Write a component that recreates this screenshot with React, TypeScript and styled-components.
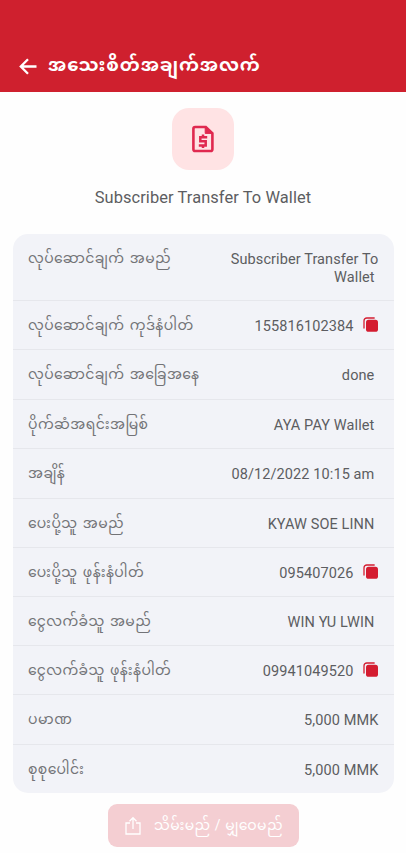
import React from "react";
import styled, { createGlobalStyle } from "styled-components";

const GlobalStyle = createGlobalStyle`
  * { box-sizing: border-box; }
  html, body { margin: 0; background: #fff; overflow: hidden; }
`;

const Screen = styled.main`
  width: 406px;
  height: 853px;
  overflow: hidden;
  display: flex;
  flex-direction: column;
  background: #fefefe;
  color: #5c5d61;
  font-family: Roboto, "Noto Sans Myanmar", "Noto Sans", sans-serif;
`;

const Header = styled.header`
  height: 92px;
  flex: none;
  display: flex;
  align-items: flex-start;
  padding: 52px 0 0 14px;
  background: #cf202e;
  color: #fff;
`;

const BackIcon = styled.svg`
  width: 28px;
  height: 28px;
  flex: none;
`;

const Title = styled.h1`
  margin: 0 0 0 6px;
  font-size: 18px;
  line-height: 26px;
  font-weight: 700;
  letter-spacing: 0.9px;
  white-space: nowrap;
`;

const Summary = styled.section`
  height: 142px;
  flex: none;
  display: flex;
  flex-direction: column;
  align-items: center;
  padding-top: 16px;
`;

const Badge = styled.div`
  width: 62px;
  height: 62px;
  border-radius: 17px;
  display: flex;
  align-items: center;
  justify-content: center;
  background: #ffe3e4;
  color: #e0294f;
`;

const SummaryName = styled.div`
  margin-top: 18px;
  font-size: 16.4px;
  line-height: 20px;
  letter-spacing: 0.1px;
`;

const Card = styled.section`
  margin: 0 12px 0 13px;
  flex: none;
  border-radius: 15px;
  overflow: hidden;
  background: #f2f3f8;
`;

const Row = styled.div<{ $height: number }>`
  height: ${(p) => p.$height}px;
  display: flex;
  justify-content: space-between;
  padding: 15px 15.6px 0 15px;
  border-bottom: 1px solid #e6e7ec;
  &:last-child { border-bottom: 0; }
`;

const Label = styled.div`
  font-size: 14px;
  line-height: 18px;
  color: #727377;
  letter-spacing: 0.43px;
  word-spacing: 1.4px;
  white-space: nowrap;
`;

const Value = styled.div<{ $inset: number }>`
  display: flex;
  align-items: flex-start;
  padding: 2px ${(p) => p.$inset}px 0 0;
  font-size: 14.5px;
  line-height: 17.5px;
  letter-spacing: 0.1px;
  text-align: right;
  white-space: pre;
`;

const CopyIcon = styled.svg`
  width: 16px;
  height: 16px;
  margin: -1px -0.2px 0 9px;
`;

const ShareButton = styled.button`
  width: 191px;
  height: 43px;
  margin: 11px 0 0 108px;
  padding: 0 0 0 15px;
  flex: none;
  display: flex;
  align-items: center;
  border: 0;
  border-radius: 9px;
  background: #f4ced2;
  color: #fff;
  font-family: inherit;
`;

const ShareText = styled.span`
  margin: -2px 0 0 11px;
  font-size: 14px;
  line-height: 20px;
  letter-spacing: 0.35px;
  word-spacing: 0.5px;
  white-space: nowrap;
`;

interface Detail {
  label: string;
  value: string;
  height: number;
  inset: number;
  copy?: boolean;
}

const details: Detail[] = [
  { label: "လုပ်ဆောင်ချက် အမည်", value: "Subscriber Transfer To\nWallet ", height: 67, inset: 0 },
  { label: "လုပ်ဆောင်ချက် ကုဒ်နံပါတ်", value: "155816102384", height: 49, inset: 0, copy: true },
  { label: "လုပ်ဆောင်ချက် အခြေအနေ", value: "done", height: 50, inset: 4 },
  { label: "ပိုက်ဆံအရင်းအမြစ်", value: "AYA PAY Wallet", height: 49, inset: 4 },
  { label: "အချိန်", value: "08/12/2022 10:15 am", height: 50, inset: 4 },
  { label: "ပေးပို့သူ အမည်", value: "KYAW SOE LINN", height: 49, inset: 4 },
  { label: "ပေးပို့သူ ဖုန်းနံပါတ်", value: "095407026", height: 49, inset: 0, copy: true },
  { label: "ငွေလက်ခံသူ အမည်", value: "WIN YU LWIN", height: 49, inset: 4 },
  { label: "ငွေလက်ခံသူ ဖုန်းနံပါတ်", value: "09941049520", height: 49, inset: 0, copy: true },
  { label: "ပမာဏ", value: "5,000 MMK", height: 50, inset: 0 },
  { label: "စုစုပေါင်း", value: "5,000 MMK", height: 48, inset: 0 },
];

export default function App() {
  return (
    <Screen>
      <GlobalStyle />
      <Header>
        <BackIcon viewBox="0 0 28 28" fill="none" stroke="currentColor" strokeWidth="2.3">
          <path d="M22.5 14.5H7.5M14 7.3l-7.2 7.2 7.2 7.2" />
        </BackIcon>
        <Title>အသေးစိတ်အချက်အလက်</Title>
      </Header>
      <Summary>
        <Badge>
          <svg width="24" height="28" viewBox="0 0 24 28" fill="none" stroke="currentColor" strokeWidth="2.6">
            <path d="M14.8 2H4.2A1.8 1.8 0 0 0 2.4 3.8v20.4A1.8 1.8 0 0 0 4.2 26h15.4a1.8 1.8 0 0 0 1.8-1.8V8.2z" />
            <path d="M14.2 2v6.4h6.8z" fill="currentColor" strokeWidth="1" />
            <path d="M16.2 12.2H9.3v4h5.4v4.2H7.8M12 9.4v2.4M12 20.6v2.4" strokeWidth="2.5" />
          </svg>
        </Badge>
        <SummaryName>Subscriber Transfer To Wallet</SummaryName>
      </Summary>
      <Card>
        {details.map((d) => (
          <Row key={d.label} $height={d.height}>
            <Label>{d.label}</Label>
            <Value $inset={d.inset}>
              {d.value}
              {d.copy && (
                <CopyIcon viewBox="0 0 16 16">
                  <path d="M1 11V3.8A2.8 2.8 0 0 1 3.8 1h7.4" fill="none" stroke="#d41c30" strokeWidth="1.3" strokeLinecap="round" />
                  <rect x="3" y="2.8" width="12" height="12" rx="2.6" fill="#d41c30" />
                </CopyIcon>
              )}
            </Value>
          </Row>
        ))}
      </Card>
      <ShareButton>
        <svg width="20" height="22" viewBox="0 0 20 22" fill="none" stroke="currentColor" strokeWidth="1.3">
          <path d="M7 8H3v11h14V8h-4M10 14V3M6.5 6.2 10 2.7l3.5 3.5" />
        </svg>
        <ShareText>သိမ်းမည် / မျှဝေမည်</ShareText>
      </ShareButton>
    </Screen>
  );
}
